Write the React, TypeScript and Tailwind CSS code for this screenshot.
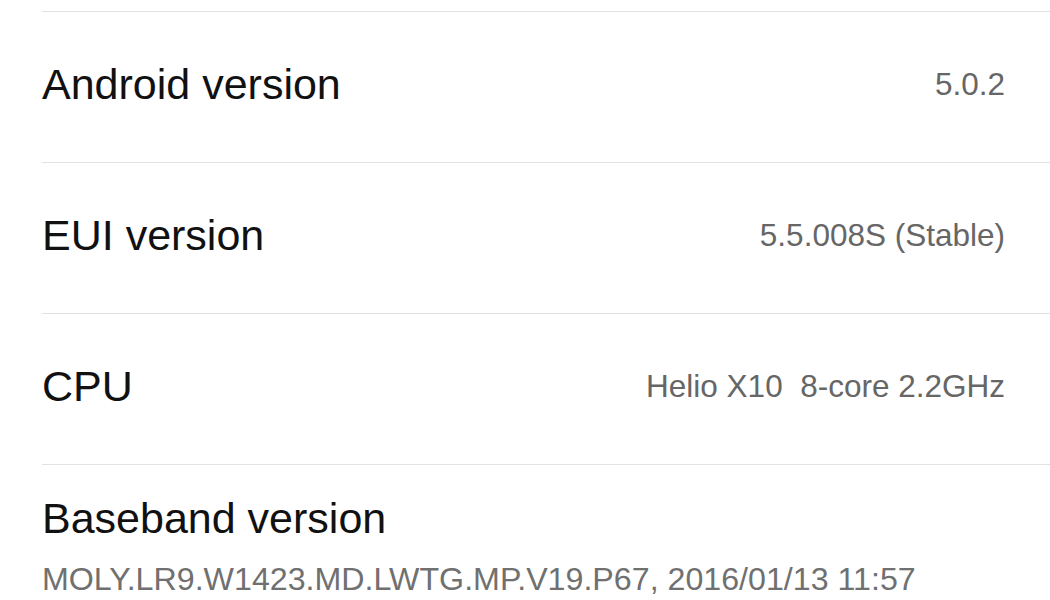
const rows = [
  { label: "Android version", value: "5.0.2" },
  { label: "EUI version", value: "5.5.008S (Stable)" },
  { label: "CPU", value: "Helio X10  8-core 2.2GHz" },
];

export default function App() {
  return (
    <div
      className="w-[1050px] h-[600px] overflow-hidden bg-white"
      style={{ fontFamily: '"Liberation Sans", Arial, sans-serif' }}
    >
      <div className="h-[11px]" />
      <div className="ml-[42px] border-t border-[#e3e3e3]">
        {rows.map((row) => (
          <div
            key={row.label}
            className="flex h-[151px] items-center justify-between border-b border-[#e3e3e3] pr-[45px] pb-[6px]"
          >
            <span className="text-[43px] leading-[48px] text-[#111]">{row.label}</span>
            <span className="mt-[1px] whitespace-pre text-[31.5px] leading-none text-[#666]">
              {row.value}
            </span>
          </div>
        ))}
        <div className="pt-[29px]">
          <div className="text-[43px] leading-[48px] text-[#111]">Baseband version</div>
          <div className="mt-[21px] text-[32.2px] leading-none text-[#707070]">
            MOLY.LR9.W1423.MD.LWTG.MP.V19.P67, 2016/01/13 11:57
          </div>
        </div>
      </div>
    </div>
  );
}
